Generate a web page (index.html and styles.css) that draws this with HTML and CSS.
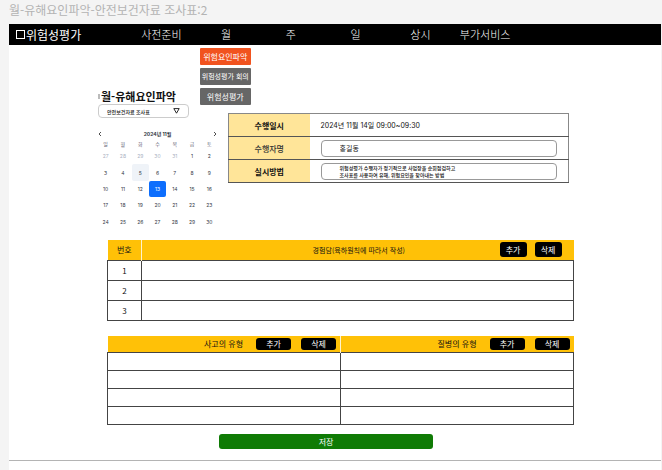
FILE: index.html
```html
<!DOCTYPE html>
<html lang="ko">
<head>
<meta charset="utf-8">
<title>위험성평가</title>
<link rel="stylesheet" href="styles.css">
</head>
<body>
<p class="page-label">월-유해요인파악-안전보건자료 조사표:2</p>
<div class="frame">
  <nav class="nav">
    <a class="brand" href="#"><span class="brand-mark"></span>위험성평가</a>
    <div class="nav-item"><a href="#">사전준비</a></div>
    <div class="nav-item"><a href="#">월</a>
      <div class="submenu">
        <a class="submenu-item active" href="#">위험요인파악</a>
        <a class="submenu-item small" href="#">위험성평가 회의</a>
        <a class="submenu-item" href="#">위험성평가</a>
      </div>
    </div>
    <div class="nav-item"><a href="#">주</a></div>
    <div class="nav-item"><a href="#">일</a></div>
    <div class="nav-item"><a href="#">상시</a></div>
    <div class="nav-item"><a href="#">부가서비스</a></div>
  </nav>
  <main class="content">
    <div class="top">
      <section class="side">
        <h1 class="title"><span class="title-mark"></span>월-유해요인파악</h1>
        <div class="picker">
          <select class="picker-select" aria-label="자료 종류"><option>안전보건자료 조사표</option></select>
          <svg class="picker-arrow" viewBox="0 0 7 6"><path d="M0.8 0.6H6.2L3.5 5.2Z"/></svg>
        </div>
        <div class="calendar">
          <div class="cal-head">
            <button class="cal-nav" aria-label="이전 달"><svg viewBox="0 0 4 6"><path d="M3 1L1 3L3 5"/></svg></button>
            <span>2024년 11월</span>
            <button class="cal-nav" aria-label="다음 달"><svg viewBox="0 0 4 6"><path d="M1 1L3 3L1 5"/></svg></button>
          </div>
          <table class="cal-table">
            <thead><tr><th>일</th><th>월</th><th>화</th><th>수</th><th>목</th><th>금</th><th>토</th></tr></thead>
            <tbody>
              <tr><td class="out">27</td><td class="out">28</td><td class="out">29</td><td class="out">30</td><td class="out">31</td><td>1</td><td>2</td></tr>
              <tr><td>3</td><td>4</td><td class="today">5</td><td>6</td><td>7</td><td>8</td><td>9</td></tr>
              <tr><td>10</td><td>11</td><td>12</td><td class="picked">13</td><td>14</td><td>15</td><td>16</td></tr>
              <tr><td>17</td><td>18</td><td>19</td><td>20</td><td>21</td><td>22</td><td>23</td></tr>
              <tr><td>24</td><td>25</td><td>26</td><td>27</td><td>28</td><td>29</td><td>30</td></tr>
            </tbody>
          </table>
        </div>
      </section>
      <table class="info">
        <tr><th>수행일시</th><td>2024년 11월 14일 09:00~09:30</td></tr>
        <tr><th class="light"><label for="name">수행자명</label></th><td><input class="field" id="name" value="홍길동"></td></tr>
        <tr><th><label for="method">실시방법</label></th><td><textarea class="field multi" id="method" rows="2">위험성평가 수행자가 정기적으로 사업장을 순회점검하고
조사표를 사용하여 유해, 위험요인을 찾아내는 방법</textarea></td></tr>
      </table>
    </div>
    <table class="grid cases">
      <thead><tr><th class="num">번호</th><th><div class="head"><span class="head-text">경험담(육하원칙에 따라서 작성)</span><div class="actions"><button class="btn">추가</button><button class="btn">삭제</button></div></div></th></tr></thead>
      <tbody>
        <tr><td>1</td><td></td></tr>
        <tr><td>2</td><td></td></tr>
        <tr><td>3</td><td></td></tr>
      </tbody>
    </table>
    <table class="grid types">
      <thead><tr>
        <th><div class="head end"><span>사고의 유형</span><div class="actions"><button class="btn">추가</button><button class="btn">삭제</button></div></div></th>
        <th><div class="head end"><span>질병의 유형</span><div class="actions"><button class="btn">추가</button><button class="btn">삭제</button></div></div></th>
      </tr></thead>
      <tbody>
        <tr><td></td><td></td></tr>
        <tr><td></td><td></td></tr>
        <tr><td></td><td></td></tr>
        <tr><td></td><td></td></tr>
      </tbody>
    </table>
    <button class="save">저장</button>
  </main>
</div>
</body>
</html>
```

FILE: styles.css
```css
* { box-sizing: border-box; }
body {
  margin: 0;
  background: #f4f4f4;
  color: #111;
  font-family: "Noto Sans CJK KR", sans-serif;
}
a { color: inherit; text-decoration: none; }
button, input, select, textarea { font-family: inherit; color: inherit; margin: 0; }
button { border: 0; padding: 0; }
table { border-collapse: collapse; table-layout: fixed; }
th, td { padding: 0; }

.page-label {
  margin: 0;
  padding: 0 9px 4px;
  font-size: 12px;
  line-height: 20px;
  color: #b3b3b3;
}
.frame {
  margin: 0 1px 0 9px;
  min-height: calc(100vh - 24px);
  background: #fff;
}

.nav {
  display: grid;
  grid-template-columns: 120px repeat(6, 1fr);
  padding-right: 22%;
  height: 21px;
  background: #000;
  color: #fff;
  font-size: 11px;
  font-weight: 300;
  line-height: 21px;
}
.brand { display: flex; align-items: center; padding-left: 7px; gap: 1px; font-size: 12px; font-weight: 400; }
.brand-mark { width: 9px; height: 9px; border: 1px solid #fff; }
.nav-item { position: relative; text-align: center; }
.submenu {
  position: absolute;
  top: 24px;
  left: 6px;
  width: 51px;
  display: grid;
  gap: 3px;
}
.submenu-item {
  border-radius: 1px;
  background: #666;
  font-size: 8px;
  font-weight: 400;
  line-height: 17px;
  white-space: nowrap;
}
.submenu-item.active { background: #f1531f; }
.submenu-item.small { font-size: 7px; }

.content { padding: 44px 88px 11px; border-bottom: 1px solid #b4b4b4; }
.top { display: flex; align-items: flex-start; gap: 10px; padding-right: 4px; }
.side { flex: 0 0 121px; }
.title { display: flex; align-items: center; gap: 1px; margin: 0; padding-left: 1px; font-size: 11px; line-height: 15px; }
.title-mark { width: 2px; height: 5px; background: #bbb; }
.picker { position: relative; width: 91px; margin-left: 1px; }
.picker-select {
  display: block;
  width: 100%;
  height: 14px;
  padding: 0 8px;
  appearance: none;
  border: 1px solid #ccc;
  border-radius: 4px;
  background: #fff;
  font-size: 5px;
  font-weight: 500;
}
.picker-arrow { position: absolute; top: 4px; right: 9px; width: 7px; height: 6px; fill: none; stroke: #111; stroke-width: 0.9; pointer-events: none; }

.calendar { margin-top: 11px; color: #343a46; font-family: Inter, "Noto Sans CJK KR", sans-serif; }
.cal-head { display: flex; align-items: center; justify-content: space-between; padding: 0 1px; font-size: 5px; font-weight: 700; line-height: 10px; }
.cal-nav { width: 4px; height: 6px; background: none; }
.cal-nav svg { display: block; width: 4px; height: 6px; fill: none; stroke: #222; stroke-width: 0.8; }
.cal-table { width: 100%; height: 91px; font-size: 5px; line-height: 8px; text-align: center; }
.cal-table th { height: 9px; font-weight: 400; color: #667; }
.cal-table td { height: 16px; }
.cal-table .out { color: #a9b1bf; }
.cal-table .today { background: #eff3f8; border-radius: 2px; }
.cal-table .picked { background: #0d6efd; border-radius: 2px; color: #fff; }

.info { flex: 1; margin-top: 24px; border: 1px solid #888; font-size: 7px; }
.info tr { height: 23px; border-bottom: 1px solid #555; }
.info th { width: 81px; background: #ffe599; font-size: 8px; font-weight: 700; }
.info .light { font-weight: 500; color: #333; }
.info td { padding: 0 11px; font-family: Inter, "Noto Sans CJK KR", sans-serif; font-size: 7px; }
.field {
  display: block;
  width: 100%;
  height: 17px;
  padding: 0 18px;
  border: 1px solid #999;
  border-radius: 4px;
  background: #fff;
  font-size: 7px;
}
.field.multi { padding: 1px 18px; font-size: 5px; font-weight: 500; line-height: 7px; resize: none; overflow: hidden; }

.grid { width: calc(100% - 9px); margin-left: 10px; font-size: 8px; text-align: center; }
.grid thead { background: #ffc107; }
.grid th { font-weight: 400; }
.grid th + th { border-left: 1px solid #fff3cd; }
.grid td { border: 1px solid #444; }
.head { display: flex; align-items: center; }
.head-text { flex: 1; }
.actions { display: flex; }
.btn { border-radius: 3px; background: #000; color: #fff; font-size: 8px; }

.cases { margin-top: 10px; }
.cases th, .cases td { height: 20px; }
.cases .num { width: 34px; }
.cases .head { padding-right: 12px; }
.cases .head-text { padding-left: 76px; font-size: 7px; }
.cases .actions { gap: 8px; }
.cases .btn { width: 27px; height: 15px; }

.types { margin-top: 15px; }
.types th { height: 17px; }
.types td { height: 18px; }
.types .head { justify-content: flex-end; gap: 13px; padding-right: 4px; }
.types .actions { gap: 10px; }
.types .btn { width: 35px; height: 12px; line-height: 12px; }

.save {
  display: block;
  width: 45%;
  margin: 9px 0 0 122px;
  height: 15px;
  border-radius: 3px;
  background: #0f7b05;
  color: #fff;
  font-size: 8px;
}
```
